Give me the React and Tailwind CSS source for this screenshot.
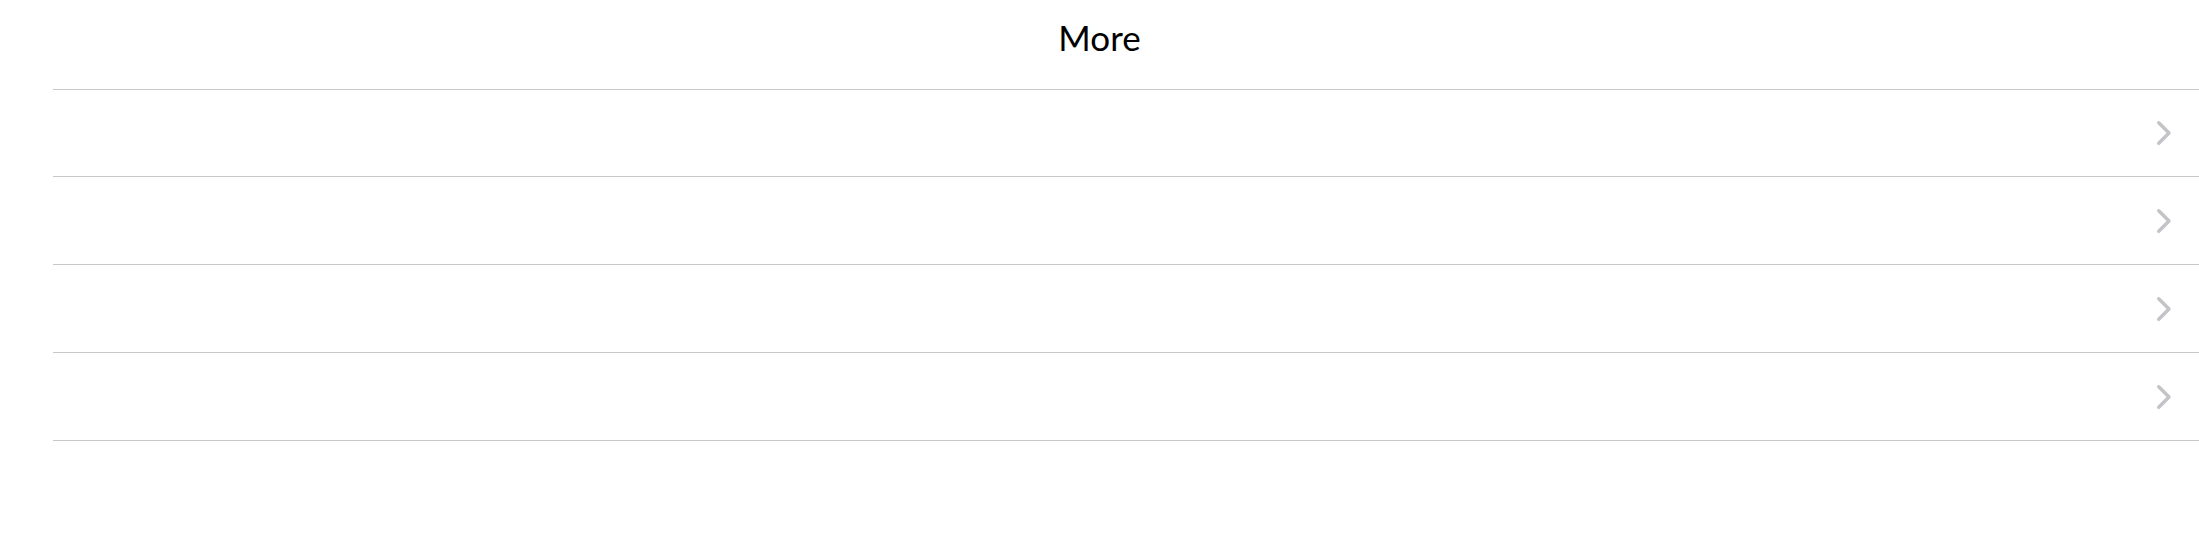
export default function App() {
  const rows = [86, 87, 87, 87];
  return (
    <div className="w-full min-h-[537px] bg-white" style={{ fontFamily: "Lato, 'Noto Sans', sans-serif" }}>
      <div className="h-[89px] flex items-start justify-center">
        <h1 className="text-[35px] leading-none font-normal text-black mt-[20px]">More</h1>
      </div>
      <div className="pl-[53px]">
        {rows.map((h, i) => (
          <div key={i} className="border-t border-[#c8c7cc] flex items-center justify-end pr-[27px]" style={{ height: h + 1 }}>
            <svg width="16" height="26" viewBox="0 0 16 26" fill="none">
              <polyline points="2.75,2.75 13,13 2.75,23.25" stroke="#c4c4c8" strokeWidth="3.5" strokeLinecap="round" strokeLinejoin="round" />
            </svg>
          </div>
        ))}
        <div className="border-t border-[#c8c7cc]" />
      </div>
    </div>
  );
}
